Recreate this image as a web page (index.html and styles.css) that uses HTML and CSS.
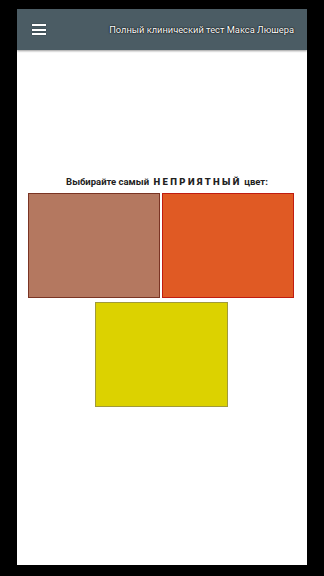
FILE: index.html
```html
<!DOCTYPE html>
<html lang="ru">
<head>
  <meta charset="UTF-8">
  <meta name="viewport" content="width=device-width, initial-scale=1.0">
  <title>Тест Люшера</title>
  <link rel="stylesheet" href="styles.css">
</head>
<body>

  <div class="screen">
    <div class="topbar">
      <div class="menu-btn">
        <span></span>
        <span></span>
        <span></span>
      </div>
      <div class="title">Полный клинический тест Макса Люшера</div>
    </div>

    <div class="main">
      <div class="prompt">Выбирайте самый <b class="spaced">НЕПРИЯТНЫЙ</b> цвет:</div>
      <div class="colors">
        <div class="color c-brown"></div>
        <div class="color c-orange"></div>
        <div class="color c-yellow"></div>
      </div>
    </div>
  </div>

</body>
</html>
```

FILE: styles.css
```css
* {
  margin: 0;
  padding: 0;
  box-sizing: border-box;
}

body {
  background: #000;
  font-family: Roboto, 'Noto Sans', sans-serif;
  height: 576px;
  padding: 9px 17px 11px;
}

.screen {
  width: 290px;
  height: 556px;
  background: #fff;
  display: flex;
  flex-direction: column;
}

.topbar {
  height: 41px;
  background: #4b5c64;
  display: flex;
  align-items: center;
  justify-content: space-between;
  padding: 0 13px 0 15px;
  box-shadow: 0 1px 2px rgba(0,0,0,0.4);
}

.menu-btn {
  display: flex;
  flex-direction: column;
  gap: 2.5px;
  width: 14px;
}

.menu-btn span {
  display: block;
  height: 2px;
  background: #fff;
  box-shadow: 0 0 1px #000;
}

.title {
  color: #fff;
  font-size: 9.3px;
  text-shadow: 0 0 2px #000, 0 0 1px #000;
}

.main {
  flex: 1;
  display: flex;
  flex-direction: column;
  align-items: center;
  padding-top: 126px;
}

.prompt {
  font-size: 9.5px;
  font-weight: bold;
  color: #222;
  margin-left: 10px;
  margin-bottom: 6px;
}

.spaced {
  letter-spacing: 2.4px;
  margin-left: 2px;
}

.colors {
  width: 266px;
  margin-right: 2px;
  display: flex;
  flex-wrap: wrap;
  justify-content: center;
  gap: 4px 2px;
}

.color {
  width: 132px;
  height: 105px;
  border: 1px solid;
}

.c-brown {
  background: #b47860;
  border-color: #7a3424;
}

.c-orange {
  background: #e05a24;
  border-color: #c01c10;
}

.c-yellow {
  width: 133px;
  background: #dcd200;
  border-color: #a09a3a;
}
```
